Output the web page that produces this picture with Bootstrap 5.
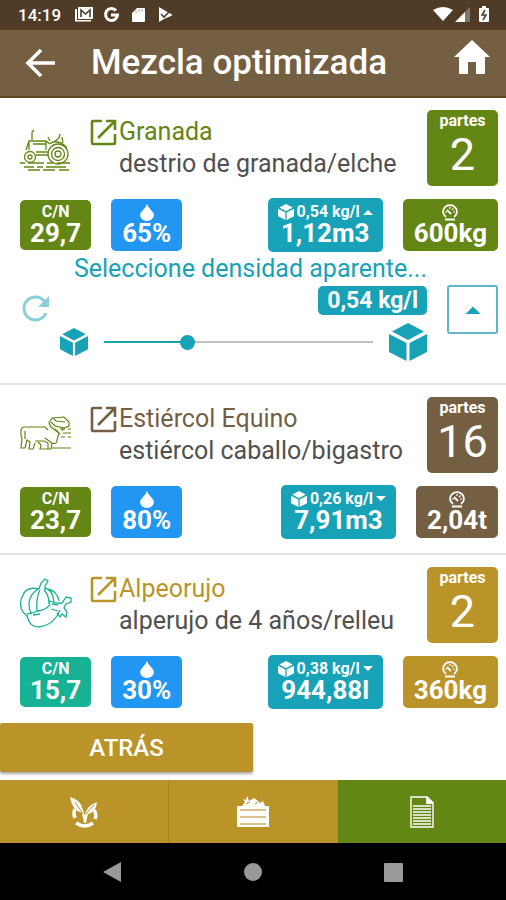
<!DOCTYPE html>
<html lang="es">
<head>
<meta charset="utf-8">
<meta name="viewport" content="width=device-width, initial-scale=1">
<title>Mezcla optimizada</title>
<link href="https://cdn.jsdelivr.net/npm/bootstrap@5.3.0/dist/css/bootstrap.min.css" rel="stylesheet">
<style>
:root{--brown:#755f43;--olive:#648614;--gold:#bb9429;--teal:#17a2b8;--blue:#2196f3;--mint:#17b294}
body{font-family:Roboto,"Liberation Sans",sans-serif;color:#505050;background:#fff}
svg{display:block;flex:none}
.plain{background:none;border:0;padding:0}
.status-bar{background:#503c26;height:30px;padding:0 16px 0 18px;font-size:17px;font-weight:500;line-height:30px}
.app-bar{background:var(--brown);height:68px;border-bottom:2px solid #5f4822}
.app-title{font-size:35px;line-height:40px;font-weight:500;margin-left:35px}
.home-link{margin-bottom:12px}
.mix-item{padding:12px 8px 14px 20px;border-bottom:2px solid #e3e3e3}
.mix-item:last-child{border-bottom:0;padding-bottom:12px}
.mix-name{font-size:25px;line-height:32px;padding-top:6px}
.mix-detail{font-size:25px;line-height:32px;padding-left:29px}
.mix-art{margin:10px 16px 0 0}
.parts{width:71px;height:76px;border-radius:5px}
.parts-label{font-size:16px;line-height:22px;font-weight:700}
.parts-value{font-size:45px;line-height:45px}
.chips{margin-top:12px}
.chip{border:0;border-radius:5px;color:#fff;font-weight:700;padding:5px 11px;display:flex;flex-direction:column;align-items:center}
.chip-cn{padding:4px 10px}
.chip-vol{padding:6px 10px}
.chip-gap{margin-left:20px}
.chip-top{font-size:16px;line-height:16px;height:16px;display:flex;align-items:center;justify-content:center;gap:3px}
.chip-num{font-size:26px;line-height:26px}
.c-olive{color:var(--olive)}.c-brown{color:var(--brown)}.c-gold{color:var(--gold)}.c-teal{color:var(--teal)}.c-mint{color:var(--mint)}
.b-olive{background:var(--olive)}.b-brown{background:var(--brown)}.b-gold{background:var(--gold)}.b-teal{background:var(--teal)}.b-blue{background:var(--blue)}.b-mint{background:var(--mint)}
.density{gap:10px;padding-bottom:8px}
.density-title{font-size:25px;line-height:34px}
.density-value{font-size:23px;line-height:29px;font-weight:700;border-radius:5px;padding:0 9px}
.density-reset{padding-top:42px;opacity:.5}
.density-close{width:51px;height:49px;margin:33px 0 0 10px;border:2px solid #62b5c5;border-radius:3px;background:#fff}
.density-range{height:16px;min-width:0}
.density-range::-webkit-slider-runnable-track{height:2px;border-radius:0;background:linear-gradient(90deg,var(--teal) 31%,#c2c2c2 31%)}
.density-range::-webkit-slider-thumb{width:15px;height:15px;margin-top:-6px;background:var(--teal)}
.density-range::-moz-range-track{height:2px;background:linear-gradient(90deg,var(--teal) 31%,#c2c2c2 31%)}
.density-range::-moz-range-thumb{width:15px;height:15px;background:var(--teal)}
.back-btn{height:49px;font-size:24px;font-weight:500;border-radius:2px;box-shadow:0 2px 3px rgba(0,0,0,.35)}
.tab-link{height:63px}
.tab-sep{border-right:1px solid #a98427}
.system-nav{height:57px;background:#000}
</style>
<script src="https://cdn.jsdelivr.net/npm/bootstrap@5.3.0/dist/js/bootstrap.bundle.min.js"></script>
</head>
<body class="d-flex flex-column min-vh-100">
<svg width="0" height="0" class="position-absolute" aria-hidden="true">
<defs>
<symbol id="open" viewBox="0 0 27 27"><path d="M12 2H3Q2 2 2 3v21q0 1 1 1h21q1 0 1-1v-9M16 2h9v9M24 3 8 19" fill="none" stroke="currentColor" stroke-width="2.6"/></symbol>
<symbol id="cube" viewBox="0 0 38 38"><path d="M19 0 35 8.500 19 17 3 8.500zM0 11l17.500 9v18L0 29zM38 11l-17.500 9v18L38 29z" fill="currentColor"/></symbol>
<symbol id="drop" viewBox="0 0 14 17"><path d="M7 0q1 3 4 6 3 3 3 5a7 6 0 0 1-14 0q0-2 3-5 3-3 4-6z" fill="currentColor"/></symbol>
<symbol id="gauge" viewBox="0 0 18 17"><g fill="none" stroke="currentColor" stroke-width="1.800"><path d="M5 13A7 6.500 0 1 1 13 13M4 15.500h10M6 6l4 4"/><path d="M9 3v2M4 8h2M12 8h2M12.500 4.500 11 6" stroke-width="1.200"/></g></symbol>
<symbol id="up" viewBox="0 0 10 6"><path d="M0 6 5 1l5 5z" fill="currentColor"/></symbol>
<symbol id="down" viewBox="0 0 10 6"><path d="M0 0h10L5 5z" fill="currentColor"/></symbol>
</defs>
</svg>

<header class="text-white">
  <div class="status-bar d-flex align-items-center justify-content-between">
    <div class="d-flex align-items-center">
      <span>14:19</span>
      <svg class="ms-2 ps-1" width="103" height="18" viewBox="0 0 99 18" fill="#fff">
        <path d="M4 3v11h14v1.500H2V3z"/><path d="M5 1h15v12H5z"/><path d="M8 11V4l4.500 4L17 4v7" fill="none" stroke="#503c26" stroke-width="1.600"/>
        <path d="M43 4.500A6 6 0 1 0 44.500 9H38" fill="none" stroke="#fff" stroke-width="3"/>
        <path d="M64 2h7q1 0 1 1v12q0 1-1 1H60q-1 0-1-1V7z"/><path d="M63 4v3M66 3v3M69 3v3" stroke="#b5aaa0"/>
        <path d="M86 1l5 3 9 5-9 4-5 3z"/><path d="m88 8 3 3 6-6" fill="none" stroke="#503c26" stroke-width="1.600"/>
      </svg>
    </div>
    <svg width="58" height="18" viewBox="0 0 58 18" fill="#fff">
      <path d="M1 4q10-6 20 0L11 15z"/><path d="M33 6v10H23z"/><path d="M33 6l5-5v15h-5z" opacity=".3"/>
      <path d="M48 2h2V0h4v2h2q1 0 1 1v12q0 1-1 1h-8q-1 0-1-1V3q0-1 1-1z"/><path d="m53 4-3 5h4l-3 5" fill="none" stroke="#503c26" stroke-width="1.500"/>
    </svg>
  </div>
  <div class="app-bar d-flex align-items-center">
    <button class="plain text-white ms-4" aria-label="Volver"><svg width="32" height="30" viewBox="0 0 32 30"><path d="M31 15H5M17 2 4 15l13 13" fill="none" stroke="currentColor" stroke-width="3.600"/></svg></button>
    <h1 class="app-title mb-0 me-auto">Mezcla optimizada</h1>
    <a href="#" class="home-link text-white me-3" aria-label="Inicio"><svg width="36" height="36" viewBox="0 0 36 36"><path d="M18 1 36 18h-5v17h-9V23h-8v12H5V18H0z" fill="currentColor"/></svg></a>
  </div>
</header>

<main class="flex-grow-1">
  <section class="mix-item">
    <div class="d-flex align-items-start">
      <svg class="mix-art c-olive" width="54" height="54" viewBox="0 0 54 54" fill="none" stroke="currentColor" stroke-width="1.300">
        <circle cx="10" cy="37" r="5.500"/><circle cx="10" cy="37" r="2"/><circle cx="38" cy="34" r="10"/><circle cx="38" cy="34" r="6.500"/><circle cx="38" cy="34" r="3"/>
        <path d="M6 30l3-9h17l4 3M13 24h13M12 20v-8l2-2M16 35h12M16 32h13M9 21v9M26 21v9M29 24q9-6 18 4M30 21l-2-4M34 22l5-4 1-4M43 23l-1-6M0 43h5m3 0h16m3 0h6m4 0h13M4 47h10m3 0h6m3 0h20M8 50h12m3 0h12m4 0h10"/>
      </svg>
      <div class="flex-grow-1">
        <div class="d-flex align-items-center mix-name c-olive"><a href="#" class="c-olive d-block" aria-label="Abrir Granada"><svg width="29" height="27"><use href="#open" width="27" height="27"/></svg></a>Granada</div>
        <div class="mix-detail">destrio de granada/elche</div>
      </div>
      <div class="parts b-olive text-white text-center"><div class="parts-label">partes</div><div class="parts-value">2</div></div>
    </div>
    <div class="chips d-flex align-items-center">
      <div class="chip chip-cn b-olive"><span class="chip-top">C/N</span><span class="chip-num">29,7</span></div>
      <div class="chip b-blue chip-gap me-auto"><span class="chip-top"><svg width="14" height="17"><use href="#drop"/></svg></span><span class="chip-num">65%</span></div>
      <button class="chip chip-vol b-teal"><span class="chip-top"><svg width="16" height="16"><use href="#cube"/></svg>0,54 kg/l<svg width="10" height="6"><use href="#up"/></svg></span><span class="chip-num">1,12m3</span></button>
      <div class="chip b-olive chip-gap"><span class="chip-top"><svg width="18" height="17"><use href="#gauge"/></svg></span><span class="chip-num">600kg</span></div>
    </div>
    <div class="density d-flex align-items-start c-teal">
      <button class="plain density-reset c-teal" aria-label="Restablecer"><svg width="30" height="30" viewBox="0 0 30 30"><path d="M25 8A11.500 11.500 0 1 0 26 19" fill="none" stroke="currentColor" stroke-width="3"/><path d="M29 2v11H18z" fill="currentColor"/></svg></button>
      <div class="flex-grow-1 text-end">
        <label class="density-title d-block" for="density">Seleccione densidad aparente...</label>
        <output class="density-value b-teal text-white d-inline-block align-top" for="density">0,54 kg/l</output>
        <div class="d-flex align-items-center mt-2">
          <svg width="28" height="28"><use href="#cube"/></svg>
          <input id="density" class="form-range density-range flex-grow-1 ms-3 me-3" type="range" min="0.3" max="1.1" step="0.01" value="0.54">
          <svg width="38" height="38"><use href="#cube"/></svg>
        </div>
      </div>
      <button class="density-close c-teal d-flex align-items-center justify-content-center" aria-label="Cerrar densidad"><svg width="16" height="9"><use href="#up"/></svg></button>
    </div>
  </section>

  <section class="mix-item">
    <div class="d-flex align-items-start">
      <svg class="mix-art c-olive" width="54" height="54" viewBox="0 0 54 54" fill="none" stroke="currentColor" stroke-width="1.200">
        <path d="M5 20h20l3 3M5 20q-4 0-4 4v5l1 3-1 9h4l2-8 3 2-1 7h4l2-6M15 34h9M24 34l4 2v6h-4M25 31l7 5-1 6h-4M32 36q5 2 5-3l2-7-8-6-2-4 3-5 12-1 5 5v4l-5 2-9-2-4-4M44 21l-2 3M33 11l3 3 9 1M18 35l3 3-1 4h4M5 24v8M40 22h5m3 0h3M43 26h8M41 30h4m3 0h3M32 41h19M35 22l5 5"/>
      </svg>
      <div class="flex-grow-1">
        <div class="d-flex align-items-center mix-name c-brown"><a href="#" class="c-brown d-block" aria-label="Abrir Estiércol Equino"><svg width="29" height="27"><use href="#open" width="27" height="27"/></svg></a>Estiércol Equino</div>
        <div class="mix-detail">estiércol caballo/bigastro</div>
      </div>
      <div class="parts b-brown text-white text-center"><div class="parts-label">partes</div><div class="parts-value">16</div></div>
    </div>
    <div class="chips d-flex align-items-center">
      <div class="chip chip-cn b-olive"><span class="chip-top">C/N</span><span class="chip-num">23,7</span></div>
      <div class="chip b-blue chip-gap me-auto"><span class="chip-top"><svg width="14" height="17"><use href="#drop"/></svg></span><span class="chip-num">80%</span></div>
      <button class="chip chip-vol b-teal"><span class="chip-top"><svg width="16" height="16"><use href="#cube"/></svg>0,26 kg/l<svg width="10" height="6"><use href="#down"/></svg></span><span class="chip-num">7,91m3</span></button>
      <div class="chip b-brown chip-gap"><span class="chip-top"><svg width="18" height="17"><use href="#gauge"/></svg></span><span class="chip-num">2,04t</span></div>
    </div>
  </section>

  <section class="mix-item">
    <div class="d-flex align-items-start">
      <svg class="mix-art c-mint" width="54" height="54" viewBox="0 0 54 54" fill="none" stroke="currentColor" stroke-width="1.300">
        <path d="M19 12l2-6 4-4 3 2-3 5v4M19 12Q7 9 3 18q-5 9 0 17l4 4M18 12q-8 5-9 14 0 8 3 11M20 13q-4 7-3 22M24 13q5 5 5 13M25 11q8 2 9 14M28 12q9 2 11 12M7 37q6-1 11-3 9-1 12-7-3-2 0-3 6 3 12 2l4-6 5 1v4l-5 2-2 4 3 4-1 5-4-3-2 3-3-4M7 38q2 12 12 12 11-1 18-11l3-6M31 32l7 2M13 38l7-1M32 27l6 1"/>
      </svg>
      <div class="flex-grow-1">
        <div class="d-flex align-items-center mix-name c-gold"><a href="#" class="c-gold d-block" aria-label="Abrir Alpeorujo"><svg width="29" height="27"><use href="#open" width="27" height="27"/></svg></a>Alpeorujo</div>
        <div class="mix-detail">alperujo de 4 años/relleu</div>
      </div>
      <div class="parts b-gold text-white text-center"><div class="parts-label">partes</div><div class="parts-value">2</div></div>
    </div>
    <div class="chips d-flex align-items-center">
      <div class="chip chip-cn b-mint"><span class="chip-top">C/N</span><span class="chip-num">15,7</span></div>
      <div class="chip b-blue chip-gap me-auto"><span class="chip-top"><svg width="14" height="17"><use href="#drop"/></svg></span><span class="chip-num">30%</span></div>
      <button class="chip chip-vol b-teal"><span class="chip-top"><svg width="16" height="16"><use href="#cube"/></svg>0,38 kg/l<svg width="10" height="6"><use href="#down"/></svg></span><span class="chip-num">944,88l</span></button>
      <div class="chip b-gold chip-gap"><span class="chip-top"><svg width="18" height="17"><use href="#gauge"/></svg></span><span class="chip-num">360kg</span></div>
    </div>
  </section>
</main>

<footer>
  <button class="plain back-btn b-gold text-white w-50 d-block mb-2">ATRÁS</button>
  <nav class="row g-0" aria-label="Secciones">
    <a href="#" class="col tab-link tab-sep b-gold d-flex align-items-center justify-content-center" aria-label="Compost"><svg width="30" height="32" viewBox="0 0 30 32" fill="#fff"><path d="M1 1q11 3 13 13l2 6q0-9 12-14-1 10-9 12l-2 9h-2l-2-10Q3 14 1 1z"/><path d="M6 13q-2 4 0 9M25 14q3 4 1 9M7 27q9 6 17 0" fill="none" stroke="#fff" stroke-width="3.500"/><path d="m6 6 8 12M25 9l-8 9" stroke="#bb9429" stroke-width="1"/></svg></a>
    <a href="#" class="col tab-link b-gold d-flex align-items-center justify-content-center" aria-label="Materiales"><svg width="32" height="32" viewBox="0 0 32 32" fill="#fff"><path d="M0 10h5l3-4-2-3 3 1 1-4 2 5 5-3 4 3 2 2 3-2 2 5h4v21H0z"/><path d="M3 14h26M3 21h26M3 28h26" stroke="#cbb06b" stroke-width="1.500"/><path d="m9 8 4-2M18 8l3-2" stroke="#bb9429"/></svg></a>
    <a href="#" class="col tab-link b-olive d-flex align-items-center justify-content-center" aria-label="Informe" aria-current="page"><svg width="24" height="32" viewBox="0 0 24 32" fill="none" stroke="#fff" stroke-width="1.400"><path d="M1 1h16l6 6v24H1zM17 1v6h6"/><path d="M17 1l6 6h-6z" fill="#fff"/><path d="M3 10h18M3 13h18M3 16h18M3 19h18M3 22h18M3 25h18M3 28h18"/></svg></a>
  </nav>
  <div class="system-nav d-flex align-items-center justify-content-center">
    <svg width="300" height="22" viewBox="0 0 300 22" fill="#999"><path d="M0 11 18 1v20z"/><circle cx="150" cy="11" r="9"/><rect x="281" y="2" width="19" height="19" rx="1"/></svg>
  </div>
</footer>
</body>
</html>
